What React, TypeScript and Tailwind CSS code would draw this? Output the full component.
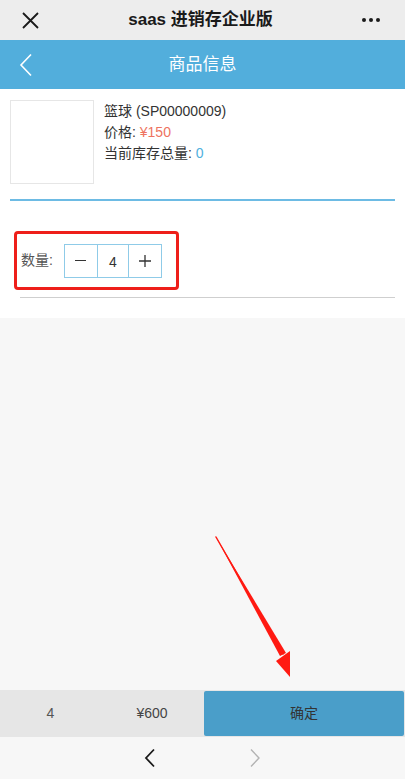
import React from "react";

const cjk = { fontFamily: '"Liberation Sans", "Noto Sans CJK SC", sans-serif' };

export default function App() {
  return (
    <div className="relative w-[405px] h-[779px] bg-[#f7f7f7] flex flex-col overflow-hidden" style={cjk}>
      {/* WeChat top bar */}
      <div className="h-[40px] bg-[#ededed] flex items-center justify-between px-[22px] shrink-0">
        <svg width="17" height="17" viewBox="0 0 17 17">
          <path d="M1 1L16 16M16 1L1 16" stroke="#1a1a1a" strokeWidth="1.8" />
        </svg>
        <div className="text-[17px] font-bold text-[#1a1a1a]">saas 进销存企业版</div>
        <div className="flex gap-[3px] pr-[3px]">
          <span className="w-[4px] h-[4px] rounded-full bg-[#1a1a1a]" />
          <span className="w-[4px] h-[4px] rounded-full bg-[#1a1a1a]" />
          <span className="w-[4px] h-[4px] rounded-full bg-[#1a1a1a]" />
        </div>
      </div>
      {/* Blue header */}
      <div className="relative h-[49px] bg-[#52aedc] flex items-center justify-center shrink-0">
        <svg className="absolute left-[18px] top-[13px]" width="16" height="24" viewBox="0 0 16 24">
          <path d="M13 1.5L3 12L13 22.5" stroke="#ffffff" strokeWidth="1.6" fill="none" />
        </svg>
        <div className="text-[17px] text-white">商品信息</div>
      </div>
      {/* Content */}
      <div className="bg-white h-[229px] shrink-0 flex flex-col">
        <div className="flex pt-[11px] px-[10px]">
          <div className="w-[84px] h-[84px] border border-[#e6e6e6] bg-white shrink-0" />
          <div className="ml-[10px] flex flex-col text-[14px] text-[#333] leading-[21px] mt-[1px]">
            <div>篮球 (SP00000009)</div>
            <div>
              价格: <span className="text-[#ee7360]">¥150</span>
            </div>
            <div>
              当前库存总量: <span className="text-[#4fb0de]">0</span>
            </div>
          </div>
        </div>
        <div className="mx-[10px] mt-[15px] border-t-2 border-[#6dbbe4]" />
        <div className="mt-[30px] ml-[14px] w-[165px] h-[59px] border-[3px] border-[#ee1f1a] rounded-[4px] flex items-center">
          <span className="ml-[4px] text-[14px] text-[#555]">数量:</span>
          <div className="ml-[11px] flex h-[34px] border border-[#8fcbe8]">
            <div className="w-[32px] flex items-center justify-center">
              <div className="w-[11px] h-[1.5px] bg-[#333]" />
            </div>
            <div className="w-[32px] border-l border-r border-[#8fcbe8] flex items-center justify-center text-[14px] text-[#333] pt-[3px]">4</div>
            <div className="w-[32px] flex items-center justify-center">
              <svg width="12" height="12" viewBox="0 0 12 12">
                <path d="M6 0V12M0 6H12" stroke="#333" strokeWidth="1.3" />
              </svg>
            </div>
          </div>
        </div>
        <div className="ml-[20px] mr-[10px] mt-[7px] h-[1px] bg-[#cfcfcf]" />
      </div>
      <div className="flex-1" />
      {/* Bottom bar */}
      <div className="h-[47px] flex shrink-0 bg-[#e6e6e6]">
        <div className="w-[101px] flex items-center justify-center text-[14px] text-[#555]">4</div>
        <div className="w-[102px] flex items-center justify-center text-[14px] text-[#444]">¥600</div>
        <div className="flex-1 my-[1px] mr-[1px] ml-[1px] bg-[#4a9ec9] rounded-[2px] flex items-center justify-center text-[14px] text-[#333]">确定</div>
      </div>
      {/* Nav bar */}
      <div className="h-[42px] bg-[#f7f7f7] flex items-center justify-center gap-[93px] shrink-0">
        <svg width="12" height="20" viewBox="0 0 12 20">
          <path d="M10 1.5L2 10L10 18.5" stroke="#1a1a1a" strokeWidth="1.8" fill="none" />
        </svg>
        <svg width="12" height="20" viewBox="0 0 12 20">
          <path d="M2 1.5L10 10L2 18.5" stroke="#b3b3b3" strokeWidth="1.4" fill="none" />
        </svg>
      </div>
      {/* Red arrow annotation */}
      <svg className="absolute left-0 top-0 pointer-events-none" width="405" height="779" viewBox="0 0 405 779">
        <path d="M216 537 L280 656 L286 653 Z" fill="#ff1a12" />
        <path d="M216 537 L283 654" stroke="#ff1a12" strokeWidth="1.5" strokeLinecap="round" />
        <path d="M276 661 L290 677 L290 651 Z" fill="#ff1a12" />
      </svg>
    </div>
  );
}
